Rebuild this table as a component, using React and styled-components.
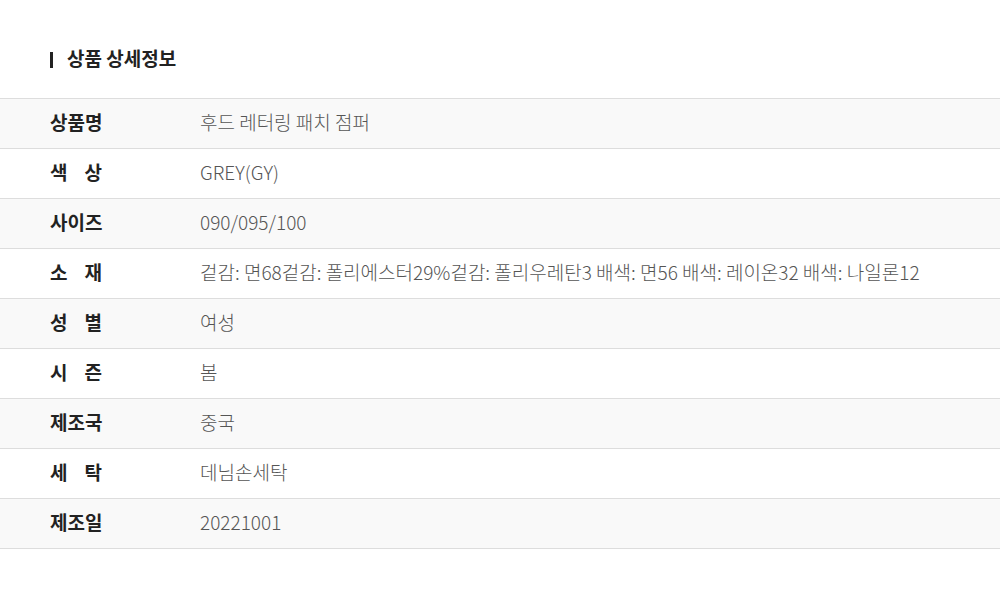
import styled, { createGlobalStyle } from 'styled-components';

const GlobalStyle = createGlobalStyle`
  body {
    margin: 0;
    background: #fff;
    font-family: 'Noto Sans CJK KR', 'Noto Sans', sans-serif;
  }
`;

const rows = [
  { label: '상품명', value: '후드 레터링 패치 점퍼' },
  { label: '색 상', value: 'GREY(GY)' },
  { label: '사이즈', value: '090/095/100' },
  {
    label: '소 재',
    value:
      '겉감: 면68겉감: 폴리에스터29%겉감: 폴리우레탄3 배색: 면56 배색: 레이온32 배색: 나일론12',
  },
  { label: '성 별', value: '여성' },
  { label: '시 즌', value: '봄' },
  { label: '제조국', value: '중국' },
  { label: '세 탁', value: '데님손세탁' },
  { label: '제조일', value: '20221001' },
];

const App = () => {
  return (
    <>
      <GlobalStyle />
      <Wrapper>
        <Title>상품 상세정보</Title>
        <Table>
          {rows.map((row, i) => (
            <Row key={row.label} $shaded={i % 2 === 0}>
              <Label>{row.label}</Label>
              <Value>{row.value}</Value>
            </Row>
          ))}
        </Table>
      </Wrapper>
    </>
  );
};

export default App;

const Wrapper = styled.div`
  width: 100%;
  padding-top: 46px;
`;

const Title = styled.h2`
  margin: 0 0 28px 50px;
  display: flex;
  align-items: center;
  gap: 14px;
  font-size: 19px;
  font-weight: 700;
  line-height: 24px;
  color: #222;

  &::before {
    content: '';
    width: 3px;
    height: 16px;
    margin-top: 3px;
    background: #222;
  }
`;

const Table = styled.div`
  border-top: 1px solid #ddd;
`;

const Row = styled.div`
  display: flex;
  align-items: center;
  box-sizing: border-box;
  height: 50px;
  padding: 0 0 5px 50px;
  border-bottom: 1px solid #ddd;
  background: ${p => (p.$shaded ? '#f9f9f9' : '#fff')};
`;

const Label = styled.div`
  width: 52px;
  margin-right: 98px;
  font-size: 19px;
  font-weight: 700;
  color: #222;
  text-align: justify;
  text-align-last: justify;
  white-space: nowrap;
`;

const Value = styled.div`
  font-size: 19px;
  font-weight: 300;
  color: #555;
  white-space: nowrap;
`;
